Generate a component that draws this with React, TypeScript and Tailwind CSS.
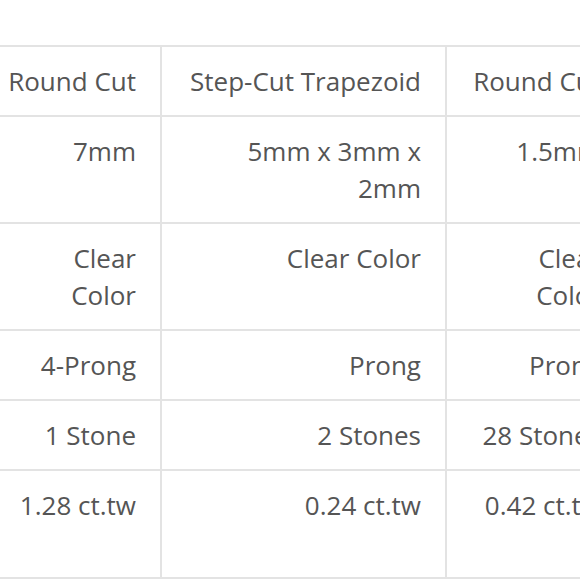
const rows: { cells: string[]; tall?: boolean }[] = [
  { cells: ["Round Cut", "Step-Cut Trapezoid", "Round Cut"] },
  { cells: ["7mm", "5mm x 3mm x 2mm", "1.5mm"] },
  { cells: ["Clear Color", "Clear Color", "Clear Color"] },
  { cells: ["4-Prong", "Prong", "Prong"] },
  { cells: ["1 Stone", "2 Stones", "28 Stones"] },
  { cells: ["1.28 ct.tw", "0.24 ct.tw", "0.42 ct.tw"], tall: true },
]

export default function App() {
  return (
    <div className="w-[580px] h-[580px] overflow-hidden bg-white">
      <table
        className="mt-[45px] ml-[-18px] w-[643px] table-fixed border-collapse text-[#555] text-[26px] leading-[37px]"
        style={{ fontFamily: '"Open Sans", "Liberation Sans", sans-serif' }}
      >
        <colgroup>
          <col className="w-[178px]" />
          <col className="w-[285px]" />
          <col className="w-[180px]" />
        </colgroup>
        <tbody>
          {rows.map((row, i) => (
            <tr key={i} className={row.tall ? "h-[108px]" : ""}>
              {row.cells.map((c, j) => (
                <td
                  key={j}
                  className="border-2 border-[#e3e3e3] pl-6 pr-6 pt-4 pb-[15px] text-right align-top"
                >
                  {c}
                </td>
              ))}
            </tr>
          ))}
        </tbody>
      </table>
    </div>
  )
}
